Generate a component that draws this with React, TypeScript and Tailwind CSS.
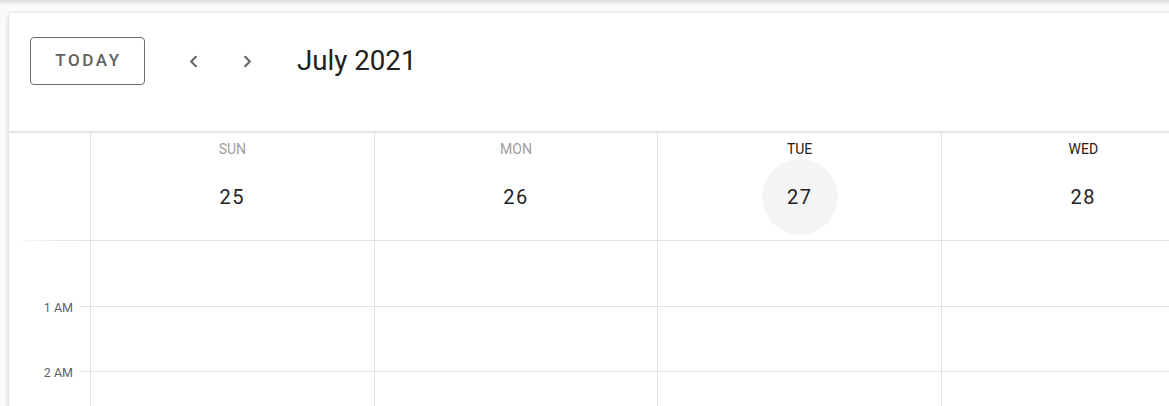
import { ChevronLeft, ChevronRight } from 'lucide-react'

export default function App() {
    const days = [
        { name: 'SUN', num: 25, past: true },
        { name: 'MON', num: 26, past: true },
        { name: 'TUE', num: 27, today: true },
        { name: 'WED', num: 28 },
    ]
    const hours = [
        { label: '1 AM', h: 'h-[66px]' },
        { label: '2 AM', h: 'h-[65px]' },
        { label: '', h: 'h-[65px]' },
    ]

    return (
        <div className="relative h-[406px] w-full overflow-hidden bg-[#fafafa] font-['Roboto',sans-serif]">
            {/* app bar shadow */}
            <div className="absolute top-0 left-0 right-0 h-[6px] bg-gradient-to-b from-[#dcdcdc] to-transparent" />

            <div className="pt-[13px] pl-[9px]">
                <div className="w-[1216px] bg-white rounded-tl-[4px] shadow-[0_1px_5px_rgba(0,0,0,0.22)]">
                    {/* Toolbar */}
                    <div className="h-[118px] flex items-start pt-[24px] pl-[21px]">
                        <button className="h-[48px] w-[115px] rounded-[4px] border border-[#6b6b6b] text-[#5f5f5f] text-[17px] font-medium tracking-[2.6px] flex items-center justify-center pl-[2px]">
                            TODAY
                        </button>
                        <div className="ml-[39px] h-[48px] flex items-center gap-[35px] text-[#616161]">
                            <ChevronLeft className="w-[19px] h-[19px]" strokeWidth={2.5} />
                            <ChevronRight className="w-[19px] h-[19px]" strokeWidth={2.5} />
                        </div>
                        <div className="ml-[40px] h-[48px] flex items-center text-[27.7px] text-[#212121]">
                            July 2021
                        </div>
                    </div>

                    {/* Day header */}
                    <div className="flex h-[110px] border-t-2 border-[#e4e4e4]">
                        <div className="relative w-[81px] shrink-0">
                            <div className="absolute bottom-0 left-0 right-0 h-px bg-gradient-to-r from-transparent via-[#ececec] to-[#e0e0e0]" />
                        </div>
                        {days.map((d) => (
                            <div key={d.name} className="w-[283.67px] shrink-0 border-l border-b border-[#e0e0e0] flex flex-col items-center">
                                <div className={`mt-[8px] text-[14px] leading-[16px] ${d.past ? 'text-[#9e9e9e]' : 'text-[#222222]'}`}>
                                    {d.name}
                                </div>
                                <div className={`mt-[2px] w-[76px] h-[76px] rounded-full flex items-center justify-center text-[20px] tracking-[1.5px] text-[#222222] ${d.today ? 'bg-[#f4f4f4]' : ''}`}>
                                    {d.num}
                                </div>
                            </div>
                        ))}
                    </div>

                    {/* Intervals */}
                    {hours.map((h, i) => (
                        <div key={i} className={`flex ${h.h}`}>
                            <div className="relative w-[81px] shrink-0">
                                {h.label && (
                                    <span className="absolute bottom-[-8px] right-[17px] text-[12.5px] leading-[14px] text-[#5f5f5f]">{h.label}</span>
                                )}
                                <div className="absolute bottom-0 right-0 w-[11px] h-px bg-[#e0e0e0]" />
                            </div>
                            {days.map((d) => (
                                <div key={d.name} className="w-[283.67px] shrink-0 border-l border-b border-[#e0e0e0]" />
                            ))}
                        </div>
                    ))}
                </div>
            </div>
        </div>
    )
}
